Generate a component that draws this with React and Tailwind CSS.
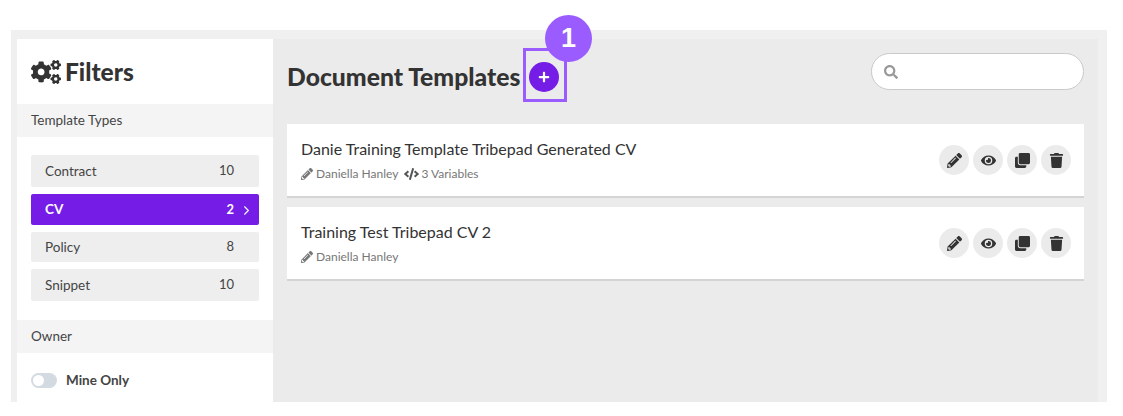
import { FaCogs, FaPencilAlt, FaEye, FaClone, FaTrash, FaCode, FaSearch, FaPlus } from "react-icons/fa";
import { ChevronRight } from "lucide-react";

const font = { fontFamily: "Lato, sans-serif" };

const types = [
  { name: "Contract", count: 10, h: "h-[32px]" },
  { name: "CV", count: 2, h: "h-[31px]", active: true },
  { name: "Policy", count: 8, h: "h-[30px]" },
  { name: "Snippet", count: 10, h: "h-[32px]" },
];

const templates = [
  { title: "Danie Training Template Tribepad Generated CV", variables: 3 },
  { title: "Training Test Tribepad CV 2" },
];

const actions = [FaPencilAlt, FaEye, FaClone, FaTrash];

const Sidebar = () => {
  return (
    <aside className="w-[256px] shrink-0 bg-white">
      <div className="h-[65px] pl-[14px] pt-[1px] flex items-center gap-[4px] text-[#333]">
        <FaCogs className="w-[30px] h-[24px]" />
        <h2 className="text-[24.5px] font-black leading-none">Filters</h2>
      </div>
      <div className="h-[33px] pl-[14px] flex items-center bg-[#f4f4f4] text-[13.5px] text-[#444]">Template Types</div>
      <div className="px-[14px] pt-[18px] pb-[19px] flex flex-col gap-[7px]">
        {types.map((type) => (
          <div
            key={type.name}
            className={`${type.h} pl-[14px] pr-[25px] relative flex items-center justify-between rounded-[2px] text-[13.5px] ${
              type.active ? "bg-[#751ce6] text-white font-bold" : "bg-[#eeeeee] text-[#444]"
            }`}
          >
            <span>{type.name}</span>
            <span className="text-[13px]">{type.count}</span>
            {type.active && <ChevronRight className="absolute right-[5px] top-[9px] w-[15px] h-[15px]" strokeWidth={1.75} />}
          </div>
        ))}
      </div>
      <div className="h-[33px] pl-[14px] flex items-center bg-[#f4f4f4] text-[13.5px] text-[#444]">Owner</div>
      <div className="pl-[14px] pt-[17px] flex items-center gap-[9px]">
        <div className="w-[26px] h-[15px] rounded-full bg-[#d3dae2] relative">
          <div className="absolute left-[2px] top-[2px] w-[11px] h-[11px] rounded-full bg-white" />
        </div>
        <span className="text-[13.5px] font-bold text-[#444]">Mine Only</span>
      </div>
    </aside>
  );
};

const TemplateCard = ({ title, variables }) => {
  return (
    <div className="h-[74px] pl-[14px] pr-[13px] bg-white border-b-2 border-[#d4d4d4] flex items-center justify-between">
      <div>
        <div className="text-[16px] leading-[20px] text-[#333]">{title}</div>
        <div className="mt-[7px] flex items-center text-[12px] leading-[16px] text-[#777]">
          <FaPencilAlt className="w-[12px] h-[12px] mr-[3px]" />
          <span>Daniella Hanley</span>
          {variables && (
            <>
              <FaCode className="w-[15px] h-[12px] ml-[6px] mr-[2px] text-[#555]" />
              <span>{variables} Variables</span>
            </>
          )}
        </div>
      </div>
      <div className="flex gap-[4px]">
        {actions.map((Icon, i) => (
          <div key={i} className="w-[30px] h-[30px] rounded-full bg-[#ebebeb] flex items-center justify-center text-[#333]">
            <Icon className="w-[15px] h-[15px]" />
          </div>
        ))}
      </div>
    </div>
  );
};

export default function App() {
  return (
    <div className="h-[416px] bg-white pt-[30px] pl-[11px] overflow-hidden relative" style={font}>
      <div className="w-[1096px] h-[372px] bg-[#f0f0f0] pt-[9px] pl-[6px] pr-[9px]">
        <div className="h-full flex">
          <Sidebar />
          <main className="flex-1 bg-[#ebebeb] pl-[14px] pr-[14px]">
            <div className="h-[85px] flex items-start justify-between">
              <div className="mt-[22px] flex items-center gap-[9px]">
                <h1 className="text-[24.7px] leading-[32px] font-black text-[#333]">Document Templates</h1>
                <div className="w-[30px] h-[30px] rounded-full bg-[#751ce6] flex items-center justify-center text-white">
                  <FaPlus className="w-[12px] h-[12px]" />
                </div>
              </div>
              <div className="mt-[14px] w-[213px] h-[37px] rounded-full bg-white border border-[#c9c9c9] pl-[12px] flex items-center text-[#999]">
                <FaSearch className="w-[14px] h-[14px]" />
              </div>
            </div>
            <div className="flex flex-col gap-[9px]">
              {templates.map((template) => (
                <TemplateCard key={template.title} {...template} />
              ))}
            </div>
          </main>
        </div>
      </div>
      {/* annotation over the add button */}
      <div className="absolute left-[523px] top-[48px] w-[44px] h-[54px] border-[3px] border-[#9b5cff]" />
      <div className="absolute left-[545px] top-[15px] w-[47px] h-[47px] rounded-full bg-[#9b5cff] flex items-center justify-center text-white text-[27px] font-bold" style={{ fontFamily: "Liberation Sans, sans-serif" }}>1</div>
    </div>
  );
}
